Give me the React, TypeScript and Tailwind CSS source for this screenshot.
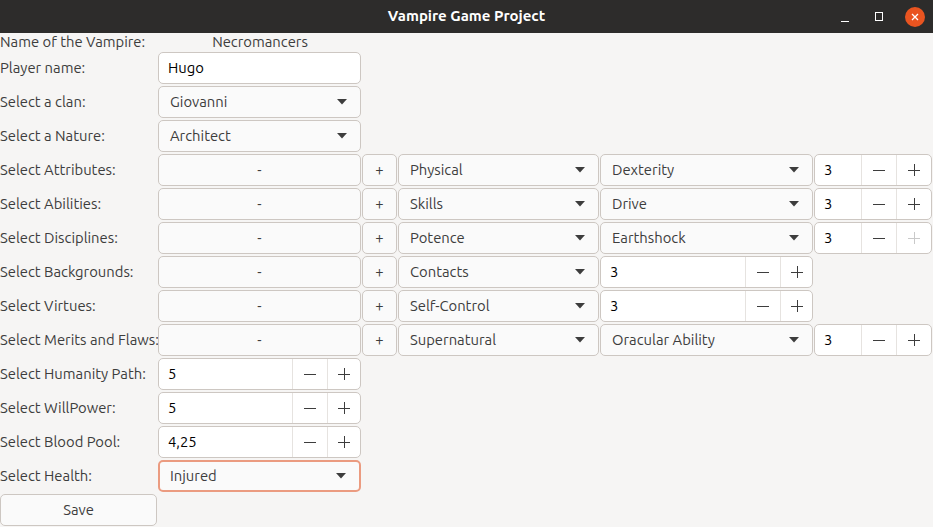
const Arrow = () => (
	<svg width="10" height="6" viewBox="0 0 10 6" className="shrink-0">
		<path d="M0 0 L10 0 L5 5.5 Z" fill="#3d3d3d" />
	</svg>
);

const Combo = ({ value, focus = false }: { value: string; focus?: boolean }) => (
	<div
		className={`flex h-full items-center justify-between rounded-[5px] bg-[#fafafa] pr-[13px] ${
			focus ? "border-2 border-[#eb9b80] pl-[10px]" : "border border-[#cdc7c2] pl-[11px]"
		}`}
	>
		<span>{value}</span>
		<Arrow />
	</div>
);

const Btn = ({ label }: { label: string }) => (
	<div className="flex h-full items-center justify-center rounded-[5px] border border-[#cdc7c2] bg-[#fafafa]">
		{label}
	</div>
);

const Minus = () => (
	<svg width="14" height="14" viewBox="0 0 14 14">
		<path d="M1 7.5 H13" stroke="#3d3d3d" strokeWidth="1" />
	</svg>
);

const Plus = ({ disabled = false }: { disabled?: boolean }) => (
	<svg width="14" height="14" viewBox="0 0 14 14">
		<path d="M1 7.5 H13 M7.5 1 V13" stroke={disabled ? "#c9c9c9" : "#3d3d3d"} strokeWidth="1" />
	</svg>
);

const Spin = ({ value, entry, plusOff = false }: { value: string; entry: string; plusOff?: boolean }) => (
	<div className="flex h-full overflow-hidden rounded-[5px] border border-[#cdc7c2] bg-white">
		<div className={`flex items-center pl-[9px] text-black ${entry}`}>{value}</div>
		<div className="flex w-[35px] items-center justify-center border-l border-[#e6e3e0]">
			<Minus />
		</div>
		<div className="flex flex-1 items-center justify-center border-l border-[#e6e3e0]">
			<Plus disabled={plusOff} />
		</div>
	</div>
);

const Label = ({ text }: { text: string }) => (
	<div className="flex h-[34px] items-center whitespace-nowrap">{text}</div>
);

const Cell = ({ children }: { children: React.ReactNode }) => (
	<div className="h-[34px] py-[1px] pr-[1px]">{children}</div>
);

type SkillRow = {
	label: string;
	first: string;
	second?: string;
	spin?: string;
	plusOff?: boolean;
};

const skillRows: SkillRow[] = [
	{ label: "Select Attributes:", first: "Physical", second: "Dexterity", spin: "3" },
	{ label: "Select Abilities:", first: "Skills", second: "Drive", spin: "3" },
	{ label: "Select Disciplines:", first: "Potence", second: "Earthshock", spin: "3", plusOff: true },
	{ label: "Select Backgrounds:", first: "Contacts" },
	{ label: "Select Virtues:", first: "Self-Control" },
	{ label: "Select Merits and Flaws:", first: "Supernatural", second: "Oracular Ability", spin: "3" },
];

const App = () => {
	return (
		<div
			className="flex h-[527px] w-[933px] flex-col overflow-hidden bg-[#f6f5f4] text-[14.8px] text-[#3d3d3d]"
			style={{ fontFamily: "Ubuntu, 'Noto Sans', sans-serif" }}
		>
			{/* title bar */}
			<div className="relative flex h-[33px] shrink-0 items-center justify-center bg-[#2d2c2b] text-[15px] text-white">
				<span className="font-bold">Vampire Game Project</span>
				<div className="absolute right-[8px] top-0 flex h-full items-center gap-[18px]">
					<svg width="16" height="16" viewBox="0 0 16 16">
						<path d="M4 12.5 H12" stroke="#fff" strokeWidth="1" />
					</svg>
					<svg width="16" height="16" viewBox="0 0 16 16">
						<rect x="4.5" y="3.5" width="7" height="8" fill="none" stroke="#fff" strokeWidth="1" />
					</svg>
					<div className="flex h-[20px] w-[20px] items-center justify-center rounded-full bg-[#e95420]">
						<svg width="10" height="10" viewBox="0 0 10 10">
							<path d="M2 2 L8 8 M8 2 L2 8" stroke="#fff" strokeWidth="1.3" />
						</svg>
					</div>
				</div>
			</div>

			<div className="grid grid-cols-[158px_204px_36px_202px_214px_119px]">
				{/* name */}
				<div className="flex h-[18px] items-center whitespace-nowrap">Name of the Vampire:</div>
				<div className="flex h-[18px] items-center justify-center">Necromancers</div>
				<div className="col-span-4" />

				<Label text="Player name:" />
				<Cell>
					<div className="flex h-full items-center rounded-[5px] border border-[#cdc7c2] bg-white pl-[9px] text-black">
						Hugo
					</div>
				</Cell>
				<div className="col-span-4" />

				<Label text="Select a clan:" />
				<Cell>
					<Combo value="Giovanni" />
				</Cell>
				<div className="col-span-4" />

				<Label text="Select a Nature:" />
				<Cell>
					<Combo value="Architect" />
				</Cell>
				<div className="col-span-4" />

				{skillRows.map((r) => (
					<div key={r.label} className="contents">
						<Label text={r.label} />
						<Cell>
							<Btn label="-" />
						</Cell>
						<Cell>
							<Btn label="+" />
						</Cell>
						<Cell>
							<Combo value={r.first} />
						</Cell>
						{r.second ? (
							<>
								<Cell>
									<Combo value={r.second} />
								</Cell>
								<Cell>
									<Spin value={r.spin ?? ""} entry="w-[46px]" plusOff={r.plusOff} />
								</Cell>
							</>
						) : (
							<>
								<Cell>
									<Spin value="3" entry="w-[144px]" />
								</Cell>
								<div />
							</>
						)}
					</div>
				))}

				{[
					["Select Humanity Path:", "5"],
					["Select WillPower:", "5"],
					["Select Blood Pool:", "4,25"],
				].map(([l, v]) => (
					<div key={l} className="contents">
						<Label text={l} />
						<Cell>
							<Spin value={v} entry="w-[133px]" />
						</Cell>
						<div className="col-span-4" />
					</div>
				))}

				<Label text="Select Health:" />
				<Cell>
					<Combo value="Injured" focus />
				</Cell>
				<div className="col-span-4" />

				<div className="h-[34px] py-[1px] pr-[1px]">
					<Btn label="Save" />
				</div>
			</div>
		</div>
	);
};

export default App;
